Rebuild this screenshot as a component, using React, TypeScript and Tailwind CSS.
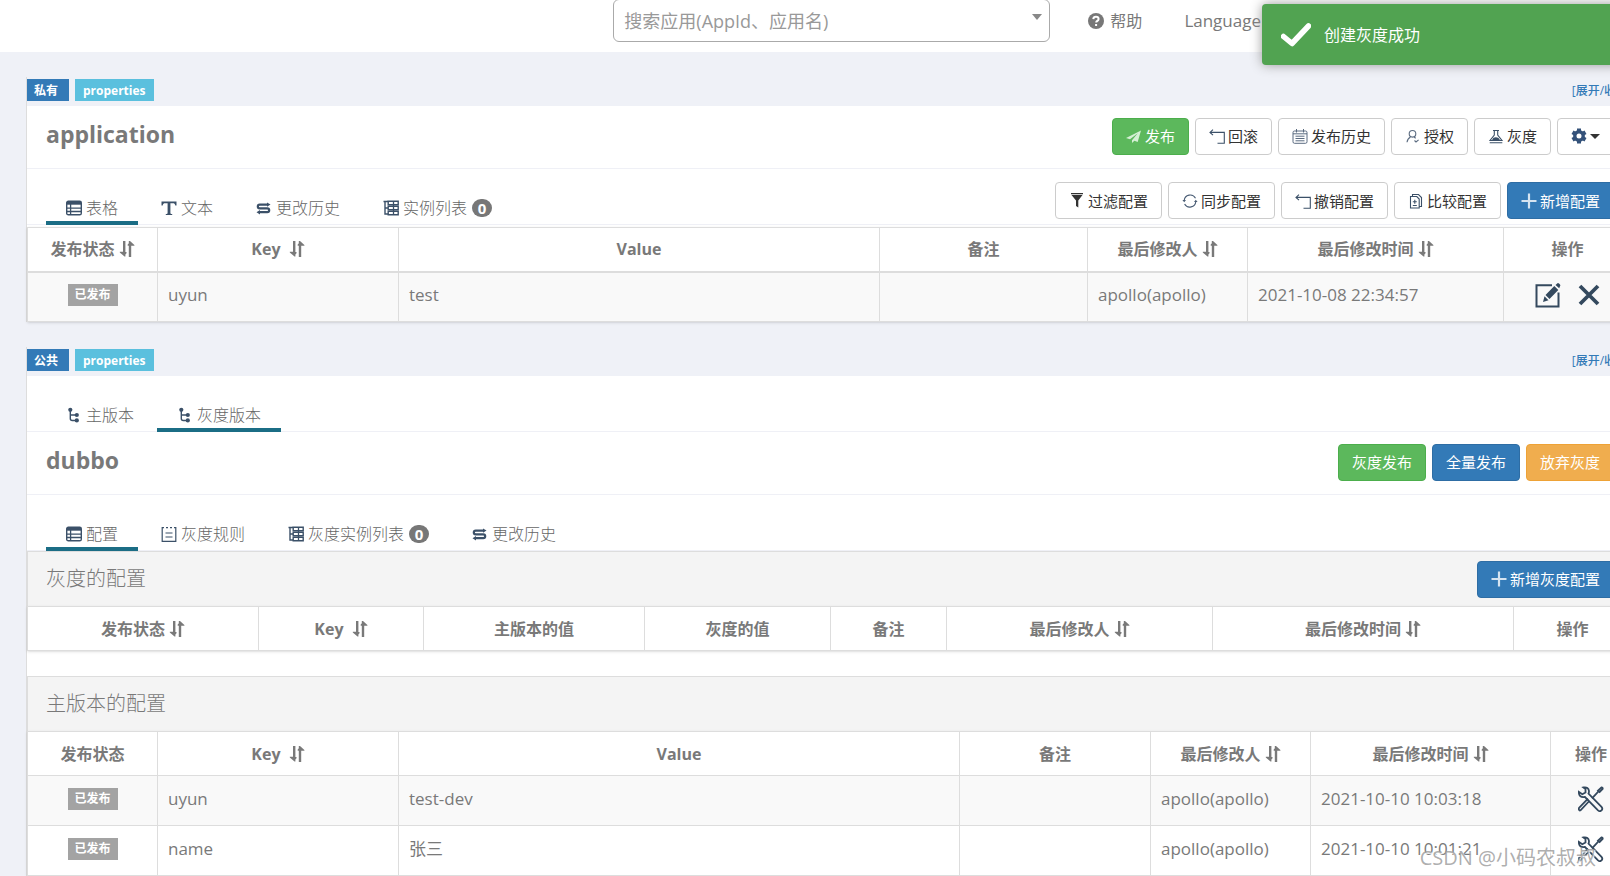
import type { ReactNode } from "react";

type Column = {
	label: string;
	width?: string;
	sortable?: boolean;
};

type ConfigItem = {
	key: string;
	value: string;
	operator: string;
	time: string;
};

type IconProps = {
	children: ReactNode;
	className?: string;
};

const namespaceColumns: Column[] = [
	{ label: "发布状态", width: "w-[130px]", sortable: true },
	{ label: "Key\u00a0", width: "w-[241px]", sortable: true },
	{ label: "Value" },
	{ label: "备注", width: "w-[208px]" },
	{ label: "最后修改人", width: "w-[160px]", sortable: true },
	{ label: "最后修改时间", width: "w-[256px]", sortable: true },
	{ label: "操作", width: "w-[128px]" },
];

const grayColumns: Column[] = [
	{ label: "发布状态", width: "w-[231px]", sortable: true },
	{ label: "Key\u00a0", width: "w-[165px]", sortable: true },
	{ label: "主版本的值" },
	{ label: "灰度的值", width: "w-[186px]" },
	{ label: "备注", width: "w-[116px]" },
	{ label: "最后修改人", width: "w-[266px]", sortable: true },
	{ label: "最后修改时间", width: "w-[301px]", sortable: true },
	{ label: "操作", width: "w-[118px]" },
];

const masterColumns: Column[] = [
	{ label: "发布状态", width: "w-[130px]" },
	{ label: "Key\u00a0", width: "w-[241px]", sortable: true },
	{ label: "Value" },
	{ label: "备注", width: "w-[191px]" },
	{ label: "最后修改人", width: "w-[160px]", sortable: true },
	{ label: "最后修改时间", width: "w-[240px]", sortable: true },
	{ label: "操作", width: "w-[81px]" },
];

const applicationItems: ConfigItem[] = [
	{
		key: "uyun",
		value: "test",
		operator: "apollo(apollo)",
		time: "2021-10-08 22:34:57",
	},
];

const masterItems: ConfigItem[] = [
	{
		key: "uyun",
		value: "test-dev",
		operator: "apollo(apollo)",
		time: "2021-10-10 10:03:18",
	},
	{
		key: "name",
		value: "张三",
		operator: "apollo(apollo)",
		time: "2021-10-10 10:01:21",
	},
];

const Icon = ({ children, className = "text-[#3b5068]" }: IconProps) => (
	<svg
		viewBox="0 0 16 16"
		className={`size-4 shrink-0 ${className}`}
		fill="none"
		stroke="currentColor"
		aria-hidden="true"
	>
		{children}
	</svg>
);

const TableIcon = () => (
	<Icon>
		<rect x="0.7" y="1.2" width="14.6" height="13.6" rx="1.6" strokeWidth="1.4" />
		<path d="M1 1.5h14v3.2H1z" fill="currentColor" stroke="none" />
		<path d="M1 8.1h14M1 11.5h14M4.6 4v11" strokeWidth="1.3" />
	</Icon>
);

const TextIcon = () => (
	<Icon>
		<path
			d="M.5 1.5h15v4h-1.2c-.3-1.6-.9-2.2-2.6-2.2H9.4v9.8c0 .7.4.9 1.8 1v.9H4.8v-.9c1.4-.1 1.8-.3 1.8-1V3.3H4.3C2.6 3.3 2 3.9 1.7 5.5H.5z"
			fill="currentColor"
			stroke="none"
		/>
	</Icon>
);

const SwitchIcon = () => (
	<Icon>
		<path d="M12 4.600H3.700a1.900 1.900 0 0 0 0 3.800h7.600a1.900 1.900 0 0 1 0 3.800H3" strokeWidth="2.200" />
		<path d="M11 2.400 14.500 4.600l-3.500 2.200zM4 10 .5 12.200l3.500 2.200z" fill="currentColor" stroke="none" />
	</Icon>
);

const InstanceIcon = () => (
	<Icon>
		<path d="M.5 1.500H5M2 1.500v12.500H5M2 8H5" strokeWidth="1.400" />
		<path d="M5.200 1.200h10v3.400h-10zM5.200 6.300h10v3.400h-10zM5.200 11.400h10v3.400h-10z" strokeWidth="1.400" />
		<path d="M10.500 1v14" strokeWidth="1.300" />
	</Icon>
);

const RuleIcon = () => (
	<Icon>
		<path d="M3 1.600H1.200v13.800h13.600V1.600H13M5 1.600h2M9 1.600h2M4.500 7h7M4.500 11h7" strokeWidth="1.200" />
	</Icon>
);

const BranchIcon = () => (
	<Icon>
		<path d="M4.300 3v8.500q0 2 2 2h3.500M4.300 8h5.500" strokeWidth="1.400" />
		<g fill="currentColor" stroke="none">
			<circle cx="4.300" cy="2.800" r="2.100" />
			<circle cx="10.800" cy="8" r="2.100" />
			<circle cx="10.800" cy="13.400" r="2.100" />
		</g>
	</Icon>
);

const SendIcon = () => (
	<Icon className="text-[#d5efd5]">
		<path d="M15 2.500 0 10l4 1.300 7.800-6-5.800 7v2.800l2.400-2.300 3.300 1.200z" fill="currentColor" stroke="none" />
	</Icon>
);

const RollbackIcon = () => (
	<Icon>
		<path d="M4 1.700 1 4.400l3 2.700M1 4.400h14.300v10.900H8.500" strokeWidth="1.100" />
	</Icon>
);

const HistoryIcon = () => (
	<Icon className="text-[#5b6b80]">
		<rect x="1" y="3" width="14" height="12.300" rx="1.500" />
		<path d="M4.500 1v3.500M11.500 1v3.500M1 5.800h14M3.500 8.200h9M3.500 10.500h9M3.500 12.800h9" />
	</Icon>
);

const UserIcon = () => (
	<Icon className="text-[#5b6b80]">
		<circle cx="7.500" cy="5.800" r="3.300" strokeWidth="1.100" />
		<path d="M5.500 9Q2.500 10.500 2 14.300M9 9l1.700 1.200M9.500 12.500l1.500 1.500 2.600-2.200" strokeWidth="1.100" />
	</Icon>
);

const FlaskIcon = () => (
	<Icon>
		<path d="M5 2.500h6M6.300 2.500v4.500L2 12.500h12L9.700 7V2.500M1.700 14.700h12.600" strokeWidth="1.100" />
		<path d="M5.500 9.800q2.500-1 5 .2l1.500 2.100H4z" fill="currentColor" stroke="none" />
	</Icon>
);

const GearIcon = () => (
	<Icon className="text-[#34527a]">
		<circle cx="8" cy="8" r="4.200" strokeWidth="3.400" />
		<path d="M8 .5v3M8 12.500v3M1.500 4.200l2.600 1.500M11.900 10.300l2.600 1.500M1.500 11.800l2.600-1.500M11.900 5.700l2.600-1.500" strokeWidth="4" />
	</Icon>
);

const FilterIcon = () => (
	<Icon className="text-[#333]">
		<path d="M2 0h12v1.200H2zM2.500 2h11L9.300 7.500v7L7 13V7.500z" fill="currentColor" stroke="none" />
	</Icon>
);

const SyncIcon = () => (
	<Icon className="text-[#4a5d75]">
		<path d="M2.200 7.500a6 6 0 0 1 11.300-2.300M13.800 8.500A6 6 0 0 1 2.600 11" strokeWidth="1.100" />
		<path d="M.4 7H4L2.200 9.200zM12 9h3.600l-1.800-2.200z" fill="currentColor" stroke="none" />
	</Icon>
);

const CompareIcon = () => (
	<Icon>
		<path d="M2.500 3.500h6.300L11.200 6v9H2.500zM4.500 3.500v-2h6l3 3v9h-2.300" strokeWidth="1.100" />
		<path d="M6.800 6.800v4M4.800 8.800h4M4.800 12.500h4" strokeWidth="1.100" />
	</Icon>
);

const PlusIcon = () => (
	<Icon className="text-[#d5e4f1]">
		<path d="M8 .5v15M.5 8h15" strokeWidth="2.200" />
	</Icon>
);

const SortIcon = () => (
	<svg viewBox="0 0 16 16" className="size-4 shrink-0" fill="currentColor" aria-hidden="true">
		<path d="M4 0h2.400v15.500H5.500L.8 11.500V10.800H4zM9.800 16h2.400V4.800h3.200V4L11 0H9.800zM6.400 11h1.100v1.200L6.400 13.500zM9.800 4.800H8.700V3.600L9.800 2.300z" />
	</svg>
);

const EditIcon = () => (
	<svg viewBox="0 0 26 26" className="size-[26px]" fill="none" stroke="currentColor" aria-hidden="true">
		<path d="M17 3.200H1.500v21.300h22V10.500" strokeWidth="2" />
		<path d="m10.500 13 8.800-9 4 4-8.800 9zM9.500 14.200l4 4-5.500 1.800zM20.500 3l1.700-1.600q.9-.7 1.800.2l1 1q.8.9 0 1.700L24.200 6.200z" fill="currentColor" stroke="none" />
	</svg>
);

const CloseIcon = () => (
	<svg viewBox="0 0 22 22" className="size-[22px]" fill="none" stroke="currentColor" aria-hidden="true">
		<path d="m2 2 18 18M20 2 2 20" strokeWidth="3.800" />
	</svg>
);

const ToolsIcon = () => (
	<svg viewBox="0 0 26 26" className="size-[26px]" fill="none" stroke="currentColor" strokeWidth="1.800" aria-hidden="true">
		<path d="M5.500 1.500q5-.8 5.500 3.500 0 1.500-.5 2.600l13 13.300q1.600 1.900 0 3.500t-3.500 0L7 11Q2 12 1 7.800l-.2-2 3.500 2.400L7.500 6.500V3z" />
		<path d="m11.300 15-8.800 9.300q-1 .7-1.500-.6-.6-1 .3-2L10 12.600M14 12.300l6.500-7M20 4.700l3.300-3.200q1.500-.2 1.400 1.300L21.600 6z" />
	</svg>
);

const Label = ({ children, className }: { children: ReactNode; className: string }) => (
	<span className={`flex h-[22px] items-center pt-px text-xs font-bold text-white ${className}`}>
		{children}
	</span>
);

const PublishedLabel = () => (
	<span className="mx-auto flex h-[22px] w-[50px] items-center justify-center bg-[#a3a3a3] pt-px text-xs font-bold text-white">
		已发布
	</span>
);

const variants = {
	default: "border-[#ccc] bg-white text-[#333]",
	success: "border-[#4cae4c] bg-[#5cb85c] text-white",
	primary: "border-[#2e6da4] bg-[#337ab7] text-white",
	warning: "border-[#eea236] bg-[#f0ad4e] text-white",
};

type ButtonProps = {
	icon?: ReactNode;
	variant?: keyof typeof variants;
	children: ReactNode;
};

const Button = ({ icon, variant = "default", children }: ButtonProps) => (
	<button
		type="button"
		className={`flex h-[37px] shrink-0 items-center gap-[3px] rounded border px-[13px] text-[15px] leading-5 whitespace-nowrap ${variants[variant]}`}
	>
		{icon}
		{children}
	</button>
);

type TabProps = {
	icon: ReactNode;
	label: string;
	active?: boolean;
	count?: number;
};

const Tab = ({ icon, label, active, count }: TabProps) => (
	<a
		href="#"
		className={`-mb-px flex h-[31px] items-center gap-1 border-b-4 px-5 text-base leading-6 font-light whitespace-nowrap text-[#666] ${
			active ? "border-[#1b6d85]" : "border-transparent"
		}`}
	>
		{icon}
		{label}
		{count !== undefined && (
			<span className="ml-px flex h-[18px] w-5 items-center justify-center rounded-full bg-[#777] text-[15px] font-bold text-white">
				{count}
			</span>
		)}
	</a>
);

const TabStrip = ({ tabs, actions }: { tabs: TabProps[]; actions?: ReactNode }) => (
	<div className="flex h-14 items-end justify-between border-b border-[#eff0f6] pr-[18px] pl-[19px]">
		<nav className="flex gap-[3px]">
			{tabs.map((tab) => (
				<Tab key={tab.label} {...tab} />
			))}
		</nav>
		{actions && <div className="flex gap-1.5 pb-[5px]">{actions}</div>}
	</div>
);

const TitleBar = ({ title, actions }: { title: string; actions: ReactNode }) => (
	<div className="flex h-[63px] items-center justify-between border-b border-[#eff0f6] pr-[18px] pb-0.5 pl-[19px]">
		<h2 className="pb-1 text-[23px] leading-7 font-bold">{title}</h2>
		<div className="flex gap-1.5">{actions}</div>
	</div>
);

type ConfigTableProps = {
	columns: Column[];
	items?: ConfigItem[];
	thickHeader?: boolean;
	actions?: ReactNode;
};

const ConfigTable = ({ columns, items = [], thickHeader, actions }: ConfigTableProps) => (
	<table className="w-full table-fixed border-collapse border border-[#ddd] bg-white shadow-sm">
		<colgroup>
			{columns.map((column) => (
				<col key={column.label} className={column.width} />
			))}
		</colgroup>
		<thead>
			<tr className={thickHeader ? "h-11 border-b-2 border-[#ddd]" : "h-11 border-b border-[#ddd]"}>
				{columns.map((column) => (
					<th key={column.label} className="border-x border-[#ddd] p-0 text-base leading-6 font-bold">
						<span className="flex items-center justify-center gap-1">
							{column.label}
							{column.sortable && <SortIcon />}
						</span>
					</th>
				))}
			</tr>
		</thead>
		<tbody className="text-[17px] leading-6">
			{items.map((item) => (
				<tr key={item.key} className="h-[50px] odd:bg-[#f9f9f9] [&>td]:border [&>td]:border-[#ddd] [&>td]:px-2.5 [&>td]:pt-2.5 [&>td]:pb-3.5">
					<td>
						<PublishedLabel />
					</td>
					<td>{item.key}</td>
					<td>{item.value}</td>
					<td />
					<td>{item.operator}</td>
					<td>{item.time}</td>
					<td>
						<div className="flex h-6 items-center justify-center gap-[17px] text-[#34495e]">{actions}</div>
					</td>
				</tr>
			))}
		</tbody>
	</table>
);

const SectionHeading = ({ title, actions }: { title: string; actions?: ReactNode }) => (
	<div className="flex h-[55px] items-center justify-between border-t border-l border-[#ddd] bg-[#f4f4f4] pr-[18px] pl-[18px]">
		<h3 className="text-xl font-light">{title}</h3>
		{actions}
	</div>
);

const Namespace = ({ scope, children }: { scope: string; children: ReactNode }) => (
	<section className="border-l border-[#ddd]">
		<div className="flex h-[29px] items-start justify-between pt-0.5">
			<div className="flex gap-1.5">
				<Label className="bg-[#337ab7] pr-[11px] pl-[7px]">{scope}</Label>
				<Label className="bg-[#5bc0de] px-2">properties</Label>
			</div>
			<a href="#" className="pt-px text-xs leading-[22px] font-medium whitespace-nowrap text-[#337ab7]">
				[展开/收起]
			</a>
		</div>
		<div className="bg-white">{children}</div>
	</section>
);

const Navbar = () => (
	<header className="flex h-[52px] items-start justify-end gap-[38px] bg-white pr-[349px]">
		<div className="relative -mt-px w-[437px]">
			<select
				aria-label="搜索应用"
				className="h-[43px] w-full appearance-none rounded-md border border-[#aaa] bg-white px-2.5 text-lg text-[#999]"
			>
				<option>搜索应用(AppId、应用名)</option>
			</select>
			<svg viewBox="0 0 10 6" className="pointer-events-none absolute top-[15px] right-2 h-1.5 w-2.5" aria-hidden="true">
				<path d="M0 0h10L5 6z" fill="#888" />
			</svg>
		</div>
		<a href="#" className="mr-1 flex h-[42px] items-center gap-1.5 text-base whitespace-nowrap">
			<svg viewBox="0 0 16 16" className="size-4" aria-hidden="true">
				<circle cx="8" cy="8" r="8" fill="#777" />
				<path d="M5.300 6.200Q5.500 3.800 8 3.800t2.600 2.200q0 1.300-1.400 2-1 .5-1 1.600M8.100 11v2" fill="none" stroke="#fff" strokeWidth="2" />
			</svg>
			帮助
		</a>
		<a href="#" className="flex h-[42px] items-center text-[17px]">
			Language
		</a>
	</header>
);

const Toast = () => (
	<div
		role="status"
		className="absolute top-1 -right-3 flex h-[61px] w-[360px] items-center gap-[13px] rounded bg-[#51a351] pl-[19px] text-base text-white shadow-[0_0_12px_#999]"
	>
		<svg viewBox="0 0 30 24" className="h-6 w-[30px]" fill="none" stroke="currentColor" aria-hidden="true">
			<path d="m2.500 13.500 8.500 7L27.500 3" strokeWidth="5.500" strokeLinecap="round" strokeLinejoin="round" />
		</svg>
		创建灰度成功
	</div>
);

const App = () => {
	return (
		<div className="relative h-screen w-full overflow-hidden bg-[#eff1f7] font-['Open_Sans','Noto_Sans_CJK_SC',sans-serif] text-[#797979]">
			<Navbar />
			<main className="-mr-[22px] ml-[26px] flex flex-col gap-[25px] pt-[25px]">
				<Namespace scope="私有">
					<TitleBar
						title="application"
						actions={
							<>
								<Button icon={<SendIcon />} variant="success">发布</Button>
								<Button icon={<RollbackIcon />}>回滚</Button>
								<Button icon={<HistoryIcon />}>发布历史</Button>
								<Button icon={<UserIcon />}>授权</Button>
								<Button icon={<FlaskIcon />}>灰度</Button>
								<Button icon={<GearIcon />}>
									<svg viewBox="0 0 10 5" className="h-[5px] w-2.5" aria-label="更多">
										<path d="M0 0h10L5 5z" fill="#333" />
									</svg>
								</Button>
							</>
						}
					/>
					<TabStrip
						tabs={[
							{ icon: <TableIcon />, label: "表格", active: true },
							{ icon: <TextIcon />, label: "文本" },
							{ icon: <SwitchIcon />, label: "更改历史" },
							{ icon: <InstanceIcon />, label: "实例列表", count: 0 },
						]}
						actions={
							<>
								<Button icon={<FilterIcon />}>过滤配置</Button>
								<Button icon={<SyncIcon />}>同步配置</Button>
								<Button icon={<RollbackIcon />}>撤销配置</Button>
								<Button icon={<CompareIcon />}>比较配置</Button>
								<Button icon={<PlusIcon />} variant="primary">新增配置</Button>
							</>
						}
					/>
					<div className="pt-0.5">
						<ConfigTable
							columns={namespaceColumns}
							items={applicationItems}
							thickHeader
							actions={
								<>
									<button type="button" aria-label="编辑"><EditIcon /></button>
									<button type="button" aria-label="删除"><CloseIcon /></button>
								</>
							}
						/>
					</div>
				</Namespace>

				<Namespace scope="公共">
					<TabStrip
						tabs={[
							{ icon: <BranchIcon />, label: "主版本" },
							{ icon: <BranchIcon />, label: "灰度版本", active: true },
						]}
					/>
					<TitleBar
						title="dubbo"
						actions={
							<>
								<Button variant="success">灰度发布</Button>
								<Button variant="primary">全量发布</Button>
								<Button variant="warning">放弃灰度</Button>
							</>
						}
					/>
					<TabStrip
						tabs={[
							{ icon: <TableIcon />, label: "配置", active: true },
							{ icon: <RuleIcon />, label: "灰度规则" },
							{ icon: <InstanceIcon />, label: "灰度实例列表", count: 0 },
							{ icon: <SwitchIcon />, label: "更改历史" },
						]}
					/>
					<SectionHeading
						title="灰度的配置"
						actions={<Button icon={<PlusIcon />} variant="primary">新增灰度配置</Button>}
					/>
					<ConfigTable columns={grayColumns} />
					<div className="pt-[25px]">
						<SectionHeading title="主版本的配置" />
						<ConfigTable
							columns={masterColumns}
							items={masterItems}
							actions={<button type="button" aria-label="修改"><ToolsIcon /></button>}
						/>
					</div>
				</Namespace>
			</main>
			<Toast />
			<p className="absolute right-3.5 bottom-1 text-xl leading-7 text-[#999]/80 [text-shadow:1px_1px_1px_#fff]">
				CSDN @小码农叔叔
			</p>
		</div>
	);
};

export default App;
